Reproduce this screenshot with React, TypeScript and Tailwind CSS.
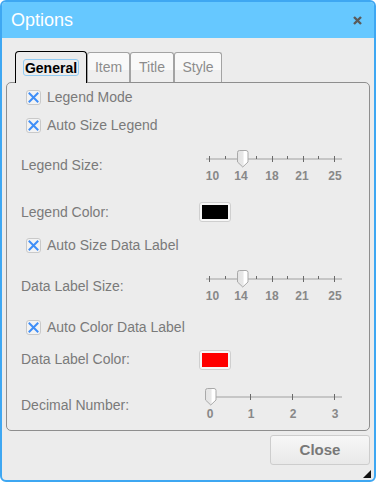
const font = { fontFamily: '"Liberation Sans", Arial, sans-serif' };

type SliderProps = {
  ticks: number[];
  major: number[];
  thumb: number;
  labels: { text: string; x: number }[];
};

const Slider = ({ ticks, major, thumb, labels }: SliderProps) => {
  return (
    <div className="relative w-[140px] h-[32px] shrink-0">
      <div className="absolute left-[2px] top-[8px] w-[136px] h-[2px] bg-[#c6c6c6]" />
      {ticks.map((t, i) => (
        <div
          key={i}
          className={`absolute w-px bg-[#6a6a6a] ${major.includes(i) ? "top-[6px] h-[6px]" : "top-[6px] h-[3px]"}`}
          style={{ left: t }}
        />
      ))}
      <svg className="absolute top-0" style={{ left: thumb - 5.5 }} width="12" height="18" viewBox="0 0 12 18">
        <defs>
          <linearGradient id="thumbg" x1="0" x2="1" y1="0" y2="0">
            <stop offset="0" stopColor="#e4e4e4" />
            <stop offset="0.55" stopColor="#e8e8e8" />
            <stop offset="0.6" stopColor="#ffffff" />
            <stop offset="1" stopColor="#ffffff" />
          </linearGradient>
        </defs>
        <path d="M0.5 2.5 Q0.5 0.5 2.5 0.5 H9 Q11 0.5 11 2.5 V12 L5.75 17 L0.5 12 Z" fill="url(#thumbg)" stroke="#a9a9a9" />
      </svg>
      {labels.map((l) => (
        <span
          key={l.text}
          className="absolute top-[20px] w-[20px] -ml-[10px] text-center text-[12px] leading-[12px] font-bold text-[#888]"
          style={{ left: l.x }}
        >
          {l.text}
        </span>
      ))}
    </div>
  );
};

const Check = ({ label }: { label: string }) => (
  <div className="flex items-center gap-[6px] pl-[19px]">
    <div className="w-[15px] h-[15px] rounded-[3px] border border-[#c9c9c9] bg-[#f3f3f3] flex items-center justify-center">
      <svg width="11" height="11" viewBox="0 0 11 11">
        <path d="M1.5 1.5 L9.5 9.5 M9.5 1.5 L1.5 9.5" stroke="#3f8ef7" strokeWidth="2" strokeLinecap="square" />
      </svg>
    </div>
    <span className="text-[14px] text-[#7a7a7a]">{label}</span>
  </div>
);

const Swatch = ({ color }: { color: string }) => (
  <div className="w-[32px] h-[20px] rounded-[3px] border border-[#cfcfcf] bg-[#f7f7f7] flex items-center justify-center">
    <div className="w-[26px] h-[14px]" style={{ background: color }} />
  </div>
);

const sizeSlider = {
  ticks: [5, 21, 37, 52, 68, 83, 99, 114, 130],
  major: [0, 2, 4, 6, 8],
  thumb: 38,
  labels: [
    { text: "10", x: 8.5 },
    { text: "14", x: 37 },
    { text: "18", x: 68 },
    { text: "21", x: 98 },
    { text: "25", x: 131 },
  ],
};

const decimalSlider = {
  ticks: [6, 46, 88, 130],
  major: [0, 1, 2, 3],
  thumb: 6,
  labels: [
    { text: "0", x: 6 },
    { text: "1", x: 47 },
    { text: "2", x: 89 },
    { text: "3", x: 131 },
  ],
};

const tabs = [
  { name: "Item", w: "w-[43px]" },
  { name: "Title", w: "w-[44px]" },
  { name: "Style", w: "w-[48px]" },
];

export default function App() {
  return (
    <div className="w-[376px] h-[482px] bg-white" style={font}>
      <div className="relative h-full rounded-[6px] border-2 border-[#3ea7f2] bg-[#ececec] flex flex-col overflow-hidden">
        <div className="h-[36px] bg-[#66c8ff] flex items-center justify-between pl-[9px] pr-[12px] shrink-0">
          <span className="text-[18px] text-white">Options</span>
          <svg width="9" height="9" viewBox="0 0 9 9">
            <path d="M1 1 L8 8 M8 1 L1 8" stroke="#5a5a5a" strokeWidth="2.4" />
          </svg>
        </div>

        <div className="px-[4px]">
          <div className="flex items-end pl-[9px] mt-[13px] h-[32px] -mb-px relative z-10">
            <div className="w-[72px] h-[32px] rounded-t-[4px] border border-b-0 border-black bg-[#ececec] flex items-center justify-center">
              <span className="px-[1px] h-[17px] rounded-[3px] border border-[#8fcaf2] flex items-center text-[14px] font-bold text-black leading-none">
                General
              </span>
            </div>
            {tabs.map((t) => (
              <div
                key={t.name}
                className={`${t.w} h-[30px] mb-px rounded-t-[3px] border border-b-0 border-[#a3a3a3] bg-[linear-gradient(#f9f9f9_58%,#efefef_58%)] flex items-center justify-center text-[14px] text-[#8c8c8c]`}
              >
                {t.name}
              </div>
            ))}
          </div>

          <div className="h-[349px] rounded-[5px] border border-[#8e8e8e] flex flex-col">
            <div className="h-[28px] flex items-center">
              <Check label="Legend Mode" />
            </div>
            <div className="h-[28px] flex items-center">
              <Check label="Auto Size Legend" />
            </div>
            <div className="h-[53px] flex items-center pl-[14px]">
              <span className="w-[183px] text-[14px] text-[#7a7a7a]">Legend Size:</span>
              <Slider {...sizeSlider} />
            </div>
            <div className="h-[40px] flex items-center pl-[14px]">
              <span className="w-[178px] text-[14px] text-[#7a7a7a]">Legend Color:</span>
              <Swatch color="#000000" />
            </div>
            <div className="h-[26px] flex items-center">
              <Check label="Auto Size Data Label" />
            </div>
            <div className="h-[56px] flex items-center pl-[14px]">
              <span className="w-[183px] text-[14px] text-[#7a7a7a]">Data Label Size:</span>
              <Slider {...sizeSlider} />
            </div>
            <div className="h-[26px] flex items-center">
              <Check label="Auto Color Data Label" />
            </div>
            <div className="h-[39px] flex items-center pl-[14px]">
              <span className="w-[178px] text-[14px] text-[#7a7a7a]">Data Label Color:</span>
              <Swatch color="#ff0000" />
            </div>
            <div className="h-[50px] flex items-center pl-[14px]">
              <span className="w-[183px] mt-[3px] text-[14px] text-[#7a7a7a]">Decimal Number:</span>
              <Slider {...decimalSlider} />
            </div>
          </div>

          <div className="flex justify-end mt-[4px]">
            <button className="w-[100px] h-[30px] rounded-[3px] border border-[#cdcdcd] bg-[linear-gradient(#f7f7f7,#e9e9e9)] text-[15px] font-bold text-[#787878]">
              Close
            </button>
          </div>
        </div>

        <svg className="absolute right-[3px] bottom-[2px]" width="8" height="8" viewBox="0 0 8 8">
          <path d="M8 0 L8 8 L0 8 Z" fill="#111" />
        </svg>
      </div>
    </div>
  );
}
